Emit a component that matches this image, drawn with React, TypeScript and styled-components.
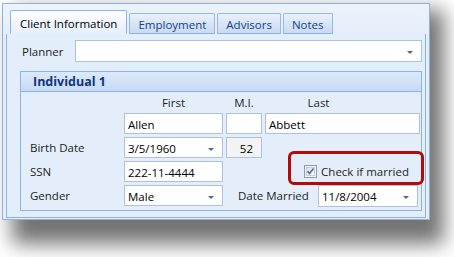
/* Core */
import styled, { createGlobalStyle } from 'styled-components';

/* Instruments */
const COLORS = {
    frame:      '#8db2e3',
    frameBg:    '#e4edf9',
    pageBg:     '#e3eefb',
    tabText:    '#15428b',
    inputLine:  '#abc1de',
    label:      '#1e1e1e',
    highlight:  '#b80808',
};

const TABS = [ 'Client Information', 'Employment', 'Advisors', 'Notes' ];

const DropArrow = () => (
    <Arrow width = '6' height = '3' viewBox = '0 0 6 3'>
        <path d = 'M0 0h6L3 3z' fill = '#4f6590' />
    </Arrow>
);

const Combo: React.FC<FieldProps> = props => (
    <Field width = { props.width }>
        <FieldText>{ props.value }</FieldText>
        <DropArrow />
    </Field>
);

export default function App() {
    return (
        <>
            <GlobalStyle />
            <Stage>
                <Shadow />
                <Window>
                    <TabStrip>
                        { TABS.map((tab, index) => (
                            <Tab key = { tab } active = { index === 0 }>{ tab }</Tab>
                        )) }
                    </TabStrip>

                    <Page>
                        <PlannerRow>
                            <PlannerLabel>Planner</PlannerLabel>
                            <Combo value = '' />
                        </PlannerRow>

                        <Group>
                            <GroupHeader>Individual 1</GroupHeader>
                            <GroupBody>
                                <span />
                                <ColumnTitle>First</ColumnTitle>
                                <ColumnTitle>M.I.</ColumnTitle>
                                <ColumnTitle offset = { -24 }>Last</ColumnTitle>

                                <span />
                                <Field><FieldText>Allen</FieldText></Field>
                                <Field />
                                <Field><FieldText>Abbett</FieldText></Field>

                                <Label>Birth Date</Label>
                                <Combo value = '3/5/1960' />
                                <Field readOnly><FieldText align = 'right'>52</FieldText></Field>
                                <span />

                                <Label>SSN</Label>
                                <Field><FieldText>222-11-4444</FieldText></Field>
                                <CheckCell>
                                    <Highlight />
                                    <CheckBox width = '13' height = '13' viewBox = '0 0 13 13'>
                                        <defs>
                                            <linearGradient id = 'cbg' x1 = '0' y1 = '0' x2 = '1' y2 = '1'>
                                                <stop offset = '0' stopColor = '#d8dde4' />
                                                <stop offset = '1' stopColor = '#ffffff' />
                                            </linearGradient>
                                        </defs>
                                        <rect x = '0.5' y = '0.5' width = '12' height = '12' fill = '#f4f4f4' stroke = '#8f9db0' />
                                        <rect x = '2.5' y = '2.5' width = '8' height = '8' fill = 'url(#cbg)' stroke = '#c8ced6' />
                                        <path d = 'M3.5 6.3l2 2.2 4-5' fill = 'none' stroke = '#4b6ea6' strokeWidth = '1.6' />
                                    </CheckBox>
                                    <CheckLabel>Check if married</CheckLabel>
                                </CheckCell>

                                <Label>Gender</Label>
                                <Combo value = 'Male' />
                                <MarriedCell>
                                    <Label>Date Married</Label>
                                    <Combo value = '11/8/2004' width = { 100 } />
                                </MarriedCell>
                            </GroupBody>
                        </Group>
                    </Page>
                </Window>
            </Stage>
        </>
    );
}

/* Styles */
const GlobalStyle = createGlobalStyle({
    'html, body': {
        margin:     0,
        background: '#ffffff',
    },
    body: {
        fontFamily: '"Open Sans", "Liberation Sans", sans-serif',
        fontSize:   11.5,
        color:      COLORS.label,
    },
    '*': {
        boxSizing: 'border-box',
    },
});

const Stage = styled('div')({
    width:     454,
    height:    257,
    padding:   '3px 0 0 2px',
    position:  'relative',
    overflow:  'hidden',
    isolation: 'isolate',
});

const Shadow = styled('div')({
    position:     'absolute',
    left:         12,
    top:          10,
    width:        432,
    height:       234,
    background:   'rgba(0, 0, 0, 0.55)',
    filter:       'blur(10px)',
    zIndex:       0,
});

const Window = styled('div')({
    width:           428,
    height:          217,
    position:        'relative',
    zIndex:          1,
    display:         'flex',
    flexDirection:   'column',
    border:          `1px solid ${COLORS.frame}`,
    backgroundColor: COLORS.frameBg,
});

const TabStrip = styled('div')({
    display:      'flex',
    alignItems:   'flex-end',
    gap:          2,
    padding:      '6px 0 0 7px',
    position:     'relative',
    zIndex:       1,
    marginBottom: -1,
    background:   'linear-gradient(#edf3fc, #e4edf9)',
});

const Tab = styled('div')<{ active?: boolean }>(({ active }) => ({
    height:       active ? 24 : 21,
    padding:      active ? '2px 9px 0' : '2px 8px 0',
    display:      'flex',
    alignItems:   'center',
    color:        active ? '#000000' : COLORS.tabText,
    border:       `1px solid ${active ? COLORS.frame : '#99b9e2'}`,
    borderBottom: active ? '1px solid #e6f0fc' : `1px solid ${COLORS.frame}`,
    borderRadius: '2px 2px 0 0',
    background:   active
        ? 'linear-gradient(#ffffff, #eef4fd 60%, #e6f0fc)'
        : 'linear-gradient(#e9f1fc, #d6e4f7 55%, #c9dbf3)',
    whiteSpace:   'nowrap',
}));

const Page = styled('div')({
    flex:            1,
    margin:          '0 3px 1px',
    padding:         '6px 3px 0 13px',
    border:          `1px solid ${COLORS.frame}`,
    backgroundColor: COLORS.pageBg,
});

const PlannerRow = styled('div')({
    display:    'flex',
    alignItems: 'center',
});

const PlannerLabel = styled('span')({
    width:       55,
    paddingLeft: 2,
});

const Field = styled('div')<{ width?: number; readOnly?: boolean }>(({ width, readOnly }) => ({
    width:           width ?? 'auto',
    flex:            width ? 'none' : 1,
    height:          22,
    display:         'flex',
    alignItems:      'center',
    padding:         '0 8px 0 3px',
    border:          `1px solid ${COLORS.inputLine}`,
    backgroundColor: readOnly ? '#f3f3f3' : '#ffffff',
    color:           '#000000',
}));

const FieldText = styled('span')<{ align?: string }>(({ align }) => ({
    flex:       1,
    textAlign:  (align ?? 'left') as 'left' | 'right',
    paddingTop: 1,
}));

const Arrow = styled('svg')({
    display:   'block',
    marginTop: 3,
});

const Group = styled('div')({
    marginTop: 9,
    border:    `1px solid ${COLORS.frame}`,
});

const GroupHeader = styled('div')({
    height:       20,
    padding:      '0 12px',
    display:      'flex',
    alignItems:   'center',
    fontWeight:   700,
    fontSize:     12.5,
    color:        '#12357f',
    borderBottom: `1px solid ${COLORS.frame}`,
    background:   'linear-gradient(#dde9fa, #c6daf4)',
});

const GroupBody = styled('div')({
    display:             'grid',
    gridTemplateColumns: '91px 99px 36px 155px',
    gridTemplateRows:    '16px repeat(4, 21px)',
    columnGap:           3,
    rowGap:              3,
    padding:             '2px 4px 4px 9px',
    backgroundColor:     '#e4eefb',
    alignItems:          'center',
    '& > *':             {
        height: '100%',
    },
});

const Label = styled('span')({
    display:    'flex',
    alignItems: 'center',
});

const ColumnTitle = styled('span')<{ offset?: number }>(({ offset }) => ({
    display:        'flex',
    alignItems:     'center',
    justifyContent: 'center',
    position:       'relative',
    left:           offset ?? 0,
}));

const CheckCell = styled('div')({
    gridColumn:     '3 / span 2',
    display:        'flex',
    alignItems:     'center',
    justifyContent: 'flex-end',
    gap:            4,
    paddingRight:   11,
    position:       'relative',
});

const Highlight = styled('div')({
    position:     'absolute',
    left:         62,
    right:        -4,
    top:          -10,
    bottom:       -3,
    border:       `3px solid ${COLORS.highlight}`,
    borderRadius: 6,
});

const CheckBox = styled('svg')({
    display: 'block',
});

const CheckLabel = styled('span')({
    fontSize: 11.5,
});

const MarriedCell = styled('div')({
    gridColumn:     '3 / span 2',
    display:        'flex',
    alignItems:     'center',
    justifyContent: 'space-between',
    padding:        '0 2px 0 12px',
});

/* Types */
interface FieldProps {
    value: string;
    width?: number;
}
